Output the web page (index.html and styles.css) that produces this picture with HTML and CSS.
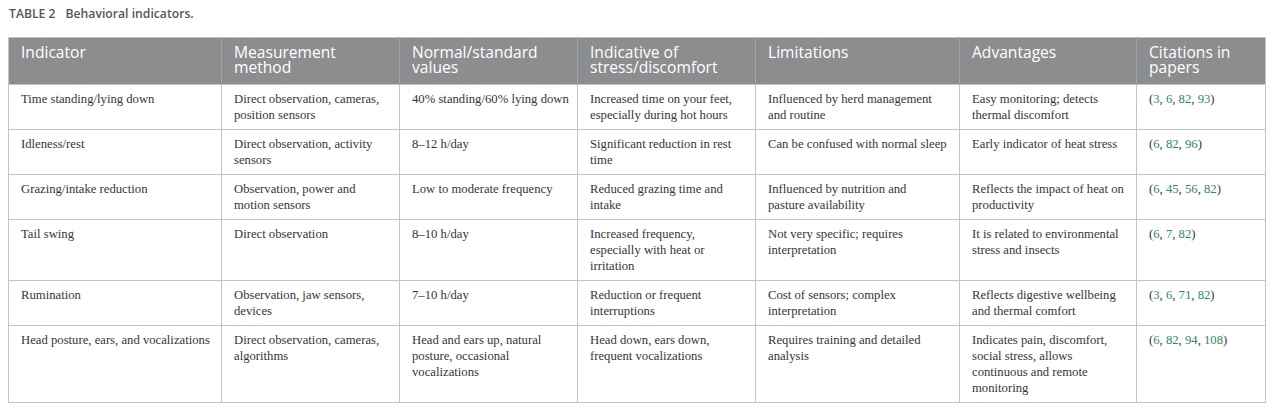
FILE: index.html
```html
<!DOCTYPE html>
<html lang="en">
<head>
<meta charset="utf-8">
<title>Behavioral indicators</title>
<link rel="stylesheet" href="styles.css">
</head>
<body>
<div class="caption"><span class="label">TABLE 2</span><span class="title">Behavioral indicators.</span></div>
<table class="data">
  <colgroup>
    <col class="c1"><col class="c2"><col class="c3"><col class="c4"><col class="c5"><col class="c6"><col class="c7">
  </colgroup>
  <thead>
    <tr>
      <th>Indicator</th>
      <th>Measurement
method</th>
      <th>Normal/standard
values</th>
      <th>Indicative of
stress/discomfort</th>
      <th>Limitations</th>
      <th>Advantages</th>
      <th>Citations in
papers</th>
    </tr>
  </thead>
  <tbody>
    <tr>
      <td>Time standing/lying down</td>
      <td>Direct observation, cameras,<br>position sensors</td>
      <td>40% standing/60% lying down</td>
      <td>Increased time on your feet,<br>especially during hot hours</td>
      <td>Influenced by herd management<br>and routine</td>
      <td>Easy monitoring; detects<br>thermal discomfort</td>
      <td>(<span class="ref">3</span>, <span class="ref">6</span>, <span class="ref">82</span>, <span class="ref">93</span>)</td>
    </tr>
    <tr>
      <td>Idleness/rest</td>
      <td>Direct observation, activity<br>sensors</td>
      <td>8–12 h/day</td>
      <td>Significant reduction in rest<br>time</td>
      <td>Can be confused with normal sleep</td>
      <td>Early indicator of heat stress</td>
      <td>(<span class="ref">6</span>, <span class="ref">82</span>, <span class="ref">96</span>)</td>
    </tr>
    <tr>
      <td>Grazing/intake reduction</td>
      <td>Observation, power and<br>motion sensors</td>
      <td>Low to moderate frequency</td>
      <td>Reduced grazing time and<br>intake</td>
      <td>Influenced by nutrition and<br>pasture availability</td>
      <td>Reflects the impact of heat on<br>productivity</td>
      <td>(<span class="ref">6</span>, <span class="ref">45</span>, <span class="ref">56</span>, <span class="ref">82</span>)</td>
    </tr>
    <tr>
      <td>Tail swing</td>
      <td>Direct observation</td>
      <td>8–10 h/day</td>
      <td>Increased frequency,<br>especially with heat or<br>irritation</td>
      <td>Not very specific; requires<br>interpretation</td>
      <td>It is related to environmental<br>stress and insects</td>
      <td>(<span class="ref">6</span>, <span class="ref">7</span>, <span class="ref">82</span>)</td>
    </tr>
    <tr>
      <td>Rumination</td>
      <td>Observation, jaw sensors,<br>devices</td>
      <td>7–10 h/day</td>
      <td>Reduction or frequent<br>interruptions</td>
      <td>Cost of sensors; complex<br>interpretation</td>
      <td>Reflects digestive wellbeing<br>and thermal comfort</td>
      <td>(<span class="ref">3</span>, <span class="ref">6</span>, <span class="ref">71</span>, <span class="ref">82</span>)</td>
    </tr>
    <tr>
      <td>Head posture, ears, and vocalizations</td>
      <td>Direct observation, cameras,<br>algorithms</td>
      <td>Head and ears up, natural<br>posture, occasional<br>vocalizations</td>
      <td>Head down, ears down,<br>frequent vocalizations</td>
      <td>Requires training and detailed<br>analysis</td>
      <td>Indicates pain, discomfort,<br>social stress, allows<br>continuous and remote<br>monitoring</td>
      <td>(<span class="ref">6</span>, <span class="ref">82</span>, <span class="ref">94</span>, <span class="ref">108</span>)</td>
    </tr>
  </tbody>
</table>
</body>
</html>
```
FILE: styles.css
```css
html, body {
  margin: 0;
  padding: 0;
  background: #ffffff;
}
body {
  padding: 6px 15px 0 8px;
}
.caption {
  font-family: "Open Sans", "Liberation Sans", sans-serif;
  font-weight: 600;
  font-size: 12.2px;
  line-height: 16px;
  color: #555759;
  padding-left: 1px;
  margin-bottom: 15px;
  white-space: nowrap;
}
.caption .label {
  margin-right: 10px;
}
.data {
  width: 1257px;
  border-collapse: collapse;
  table-layout: fixed;
  border: 1px solid #c4c4c4;
}
.c1 { width: 213px; }
.c2 { width: 178px; }
.c3 { width: 178px; }
.c4 { width: 178px; }
.c5 { width: 204px; }
.c6 { width: 177px; }
.c7 { width: 129px; }
.data th {
  background: #8b8d8f;
  color: #ffffff;
  font-family: "Open Sans", "Liberation Sans", sans-serif;
  font-weight: 400;
  font-size: 15.6px;
  line-height: 15px;
  text-align: left;
  vertical-align: top;
  padding: 7px 4px 9px 12px;
  border-left: 1px solid #a3a5a7;
  white-space: pre-line;
}
.data th:first-child {
  border-left: none;
}
.data td {
  font-family: "Liberation Serif", "Times New Roman", serif;
  font-size: 12.7px;
  line-height: 16px;
  color: #363636;
  vertical-align: top;
  padding: 6px 4px 6px 12px;
  border: 1px solid #c4c4c4;
  white-space: nowrap;
}
.ref {
  color: #2e8b57;
}
```
